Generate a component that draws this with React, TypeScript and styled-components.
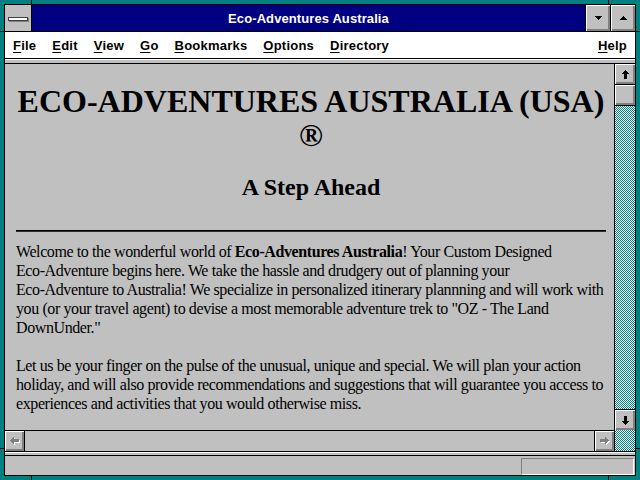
import React from 'react'
import styled, { createGlobalStyle } from 'styled-components'

const GlobalStyle = createGlobalStyle`
  html, body {
    margin: 0;
    padding: 0;
    background: #008080;
  }
  body {
    width: 640px;
    height: 480px;
    overflow: hidden;
  }
`

const dither = `repeating-conic-gradient(#008080 0 25%, #ffffff 0 50%) 0 0 / 2px 2px`

const bevel = `inset 1px 1px #ffffff, inset -1px -1px #808080, inset -2px -2px #808080`

// teal sizing frame, with the little notches 31px in from each corner
const Frame = styled.div`
    width: 640px;
    height: 480px;
    box-sizing: border-box;
    padding: 4px;
    background:
      linear-gradient(#000, #000) 31px 0 / 1px 100% no-repeat,
      linear-gradient(#000, #000) 608px 0 / 1px 100% no-repeat,
      linear-gradient(#000, #000) 0 31px / 100% 1px no-repeat,
      linear-gradient(#000, #000) 0 448px / 100% 1px no-repeat,
      #008080;
`

const Window = styled.div`
    height: 100%;
    box-sizing: border-box;
    border: 1px solid #000;
    display: flex;
    flex-direction: column;
    background: #c0c0c0;
`

const TitleBar = styled.div`
    flex: none;
    height: 26px;
    display: flex;
    border-bottom: 1px solid #000;
`

const SysMenu = styled.div`
    width: 26px;
    border-right: 1px solid #000;
    background: #c0c0c0;
    display: flex;
    align-items: center;
    justify-content: center;
`

const SysBar = styled.span`
    width: 18px;
    height: 2px;
    background: #fff;
    border: 1px solid #404040;
    box-shadow: 1px 1px 0 #808080;
    margin-top: 1px;
`

const Caption = styled.div`
    flex: 1;
    background: #000080;
    color: #fff;
    display: flex;
    align-items: center;
    justify-content: center;
    font-family: "Liberation Sans", Arial, sans-serif;
    font-weight: bold;
    font-size: 13px;
    letter-spacing: 0.1px;
`

const TitleButton = styled.div`
    width: 24px;
    border-left: 1px solid #000;
    background: #c0c0c0;
    box-shadow: ${bevel};
    display: flex;
    align-items: center;
    justify-content: center;
    padding-bottom: 1px;
`

const MenuBar = styled.div`
    flex: none;
    height: 26px;
    background: #fff;
    border-bottom: 1px solid #000;
    display: flex;
    align-items: center;
    font-family: "Liberation Sans", Arial, sans-serif;
    font-weight: bold;
    font-size: 13px;
    letter-spacing: 0.22px;
    color: #000;
`

const MenuItem = styled.span<{ $right?: boolean }>`
    padding: 0 8px;
    margin-left: ${p => (p.$right ? 'auto' : '0')};
`

const Accel = styled.span`
    text-decoration: underline;
    text-underline-offset: 2px;
`

const Band = styled.div`
    flex: none;
    height: 3px;
    background: #c0c0c0;
    border-top: 1px solid #fff;
    border-bottom: 1px solid #000;
`

const Middle = styled.div`
    flex: 1;
    min-height: 0;
    display: flex;
    border-bottom: 1px solid #000;
`

const LeftCol = styled.div`
    flex: 1;
    min-width: 0;
    display: flex;
    flex-direction: column;
`

const Content = styled.div`
    flex: 1;
    min-height: 0;
    overflow: hidden;
    background: #c0c0c0;
    padding: 0 8px 0 11px;
    color: #000;
    font-family: "Liberation Serif", "Times New Roman", serif;
`

const Heading = styled.h1`
    margin: 20px 0 0;
    font-size: 32px;
    line-height: 34px;
    font-weight: bold;
    text-align: center;
`

const NoWrap = styled.span`
    white-space: nowrap;
`

const Sub = styled.h2`
    margin: 21px 0 0;
    font-size: 24px;
    line-height: 28px;
    font-weight: bold;
    text-align: center;
`

const Rule = styled.hr`
    margin: 29px 0 0;
    height: 0;
    border: none;
    border-top: 1px solid #000;
    border-bottom: 1px solid #303030;
`

// the page wraps at fixed points in the reference, so the lines are given
const Para = styled.p<{ $gap: number }>`
    margin: ${p => p.$gap}px 0 0;
    font-size: 16px;
    line-height: 19px;
    letter-spacing: -0.4px;
    white-space: nowrap;
`

const HScroll = styled.div`
    flex: none;
    height: 20px;
    border-top: 1px solid #000;
    display: flex;
    background: #c0c0c0;
`

const HButton = styled.div<{ $side: 'left' | 'right' }>`
    width: 19px;
    background: #c0c0c0;
    box-shadow: ${bevel};
    display: flex;
    align-items: center;
    justify-content: center;
    ${p => (p.$side === 'left' ? 'border-right: 1px solid #000;' : 'border-left: 1px solid #000;')}
`

const HTrack = styled.div`
    flex: 1;
`

const VScroll = styled.div`
    flex: none;
    width: 20px;
    border-left: 1px solid #000;
    display: flex;
    flex-direction: column;
`

const VButton = styled.div<{ $edge: 'top' | 'bottom' }>`
    flex: none;
    height: 20px;
    background: #c0c0c0;
    box-shadow: ${bevel};
    display: flex;
    align-items: center;
    justify-content: center;
    ${p => (p.$edge === 'bottom' ? 'border-bottom: 1px solid #000;' : 'border-top: 1px solid #000;')}
`

const Thumb = styled.div`
    flex: none;
    height: 20px;
    background: #c0c0c0;
    box-shadow: ${bevel};
    border-bottom: 1px solid #000;
`

const Track = styled.div<{ $size?: number }>`
    flex: ${p => (p.$size ? `none` : '1')};
    height: ${p => (p.$size ? `${p.$size}px` : 'auto')};
    background: ${dither};
`

const BottomBand = styled.div`
    flex: none;
    height: 2px;
    background: #c0c0c0;
    border-top: 1px solid #fff;
    border-bottom: 1px solid #000;
`

const StatusBar = styled.div`
    flex: none;
    height: 17px;
    display: flex;
    justify-content: flex-end;
    padding: 2px 1px 0 0;
`

const StatusPanel = styled.div`
    width: 111px;
    height: 15px;
    border: 1px solid;
    border-color: #808080 #fff #fff #808080;
`

const Tri = ({ up }: { up?: boolean }) => (
    <svg width="7" height="4" viewBox="0 0 7 4" shapeRendering="crispEdges">
        <polygon points={up ? '3.5,0 7,4 0,4' : '0,0 7,0 3.5,4'} fill="#000" />
    </svg>
)

const VArrow = ({ up }: { up?: boolean }) => (
    <svg width="7" height="9" viewBox="0 0 7 9" shapeRendering="crispEdges">
        <polygon
            points={up ? '3.5,0 7,4 5,4 5,9 2,9 2,4 0,4' : '2,0 5,0 5,5 7,5 3.5,9 0,5 2,5'}
            fill="#000"
        />
    </svg>
)

const HArrow = ({ left }: { left?: boolean }) => {
    const pts = left ? '0,3.5 4,0 4,2 9,2 9,5 4,5 4,7' : '9,3.5 5,0 5,2 0,2 0,5 5,5 5,7'
    return (
        <svg width="10" height="8" viewBox="0 0 10 8" shapeRendering="crispEdges">
            <polygon points={pts} fill="#fff" transform="translate(1,1)" />
            <polygon points={pts} fill="#808080" />
        </svg>
    )
}

const menus = ['File', 'Edit', 'View', 'Go', 'Bookmarks', 'Options', 'Directory']

export default function App() {
    return (
        <Frame>
            <GlobalStyle />
            <Window>
                <TitleBar>
                    <SysMenu>
                        <SysBar />
                    </SysMenu>
                    <Caption>Eco-Adventures Australia</Caption>
                    <TitleButton>
                        <Tri />
                    </TitleButton>
                    <TitleButton>
                        <Tri up />
                    </TitleButton>
                </TitleBar>
                <MenuBar>
                    {menus.map(m => (
                        <MenuItem key={m}>
                            <Accel>{m[0]}</Accel>
                            {m.slice(1)}
                        </MenuItem>
                    ))}
                    <MenuItem $right>
                        <Accel>H</Accel>elp
                    </MenuItem>
                </MenuBar>
                <Band />
                <Middle>
                    <LeftCol>
                        <Content>
                            <Heading>
                                <NoWrap>ECO-ADVENTURES AUSTRALIA (USA)</NoWrap> ®
                            </Heading>
                            <Sub>A Step Ahead</Sub>
                            <Rule />
                            <Para $gap={10}>
                                Welcome to the wonderful world of <b>Eco-Adventures Australia</b>! Your Custom Designed
                                <br />
                                Eco-Adventure begins here. We take the hassle and drudgery out of planning your
                                <br />
                                Eco-Adventure to Australia! We specialize in personalized itinerary plannning and will work with
                                <br />
                                you (or your travel agent) to devise a most memorable adventure trek to "OZ - The Land
                                <br />
                                DownUnder."
                            </Para>
                            <Para $gap={19}>
                                Let us be your finger on the pulse of the unusual, unique and special. We will plan your action
                                <br />
                                holiday, and will also provide recommendations and suggestions that will guarantee you access to
                                <br />
                                experiences and activities that you would otherwise miss.
                            </Para>
                        </Content>
                        <HScroll>
                            <HButton $side="left">
                                <HArrow left />
                            </HButton>
                            <HTrack />
                            <HButton $side="right">
                                <HArrow />
                            </HButton>
                        </HScroll>
                    </LeftCol>
                    <VScroll>
                        <VButton $edge="bottom">
                            <VArrow up />
                        </VButton>
                        <Thumb />
                        <Track />
                        <VButton $edge="top">
                            <VArrow />
                        </VButton>
                        <Track $size={21} />
                    </VScroll>
                </Middle>
                <BottomBand />
                <StatusBar>
                    <StatusPanel />
                </StatusBar>
            </Window>
        </Frame>
    )
}
